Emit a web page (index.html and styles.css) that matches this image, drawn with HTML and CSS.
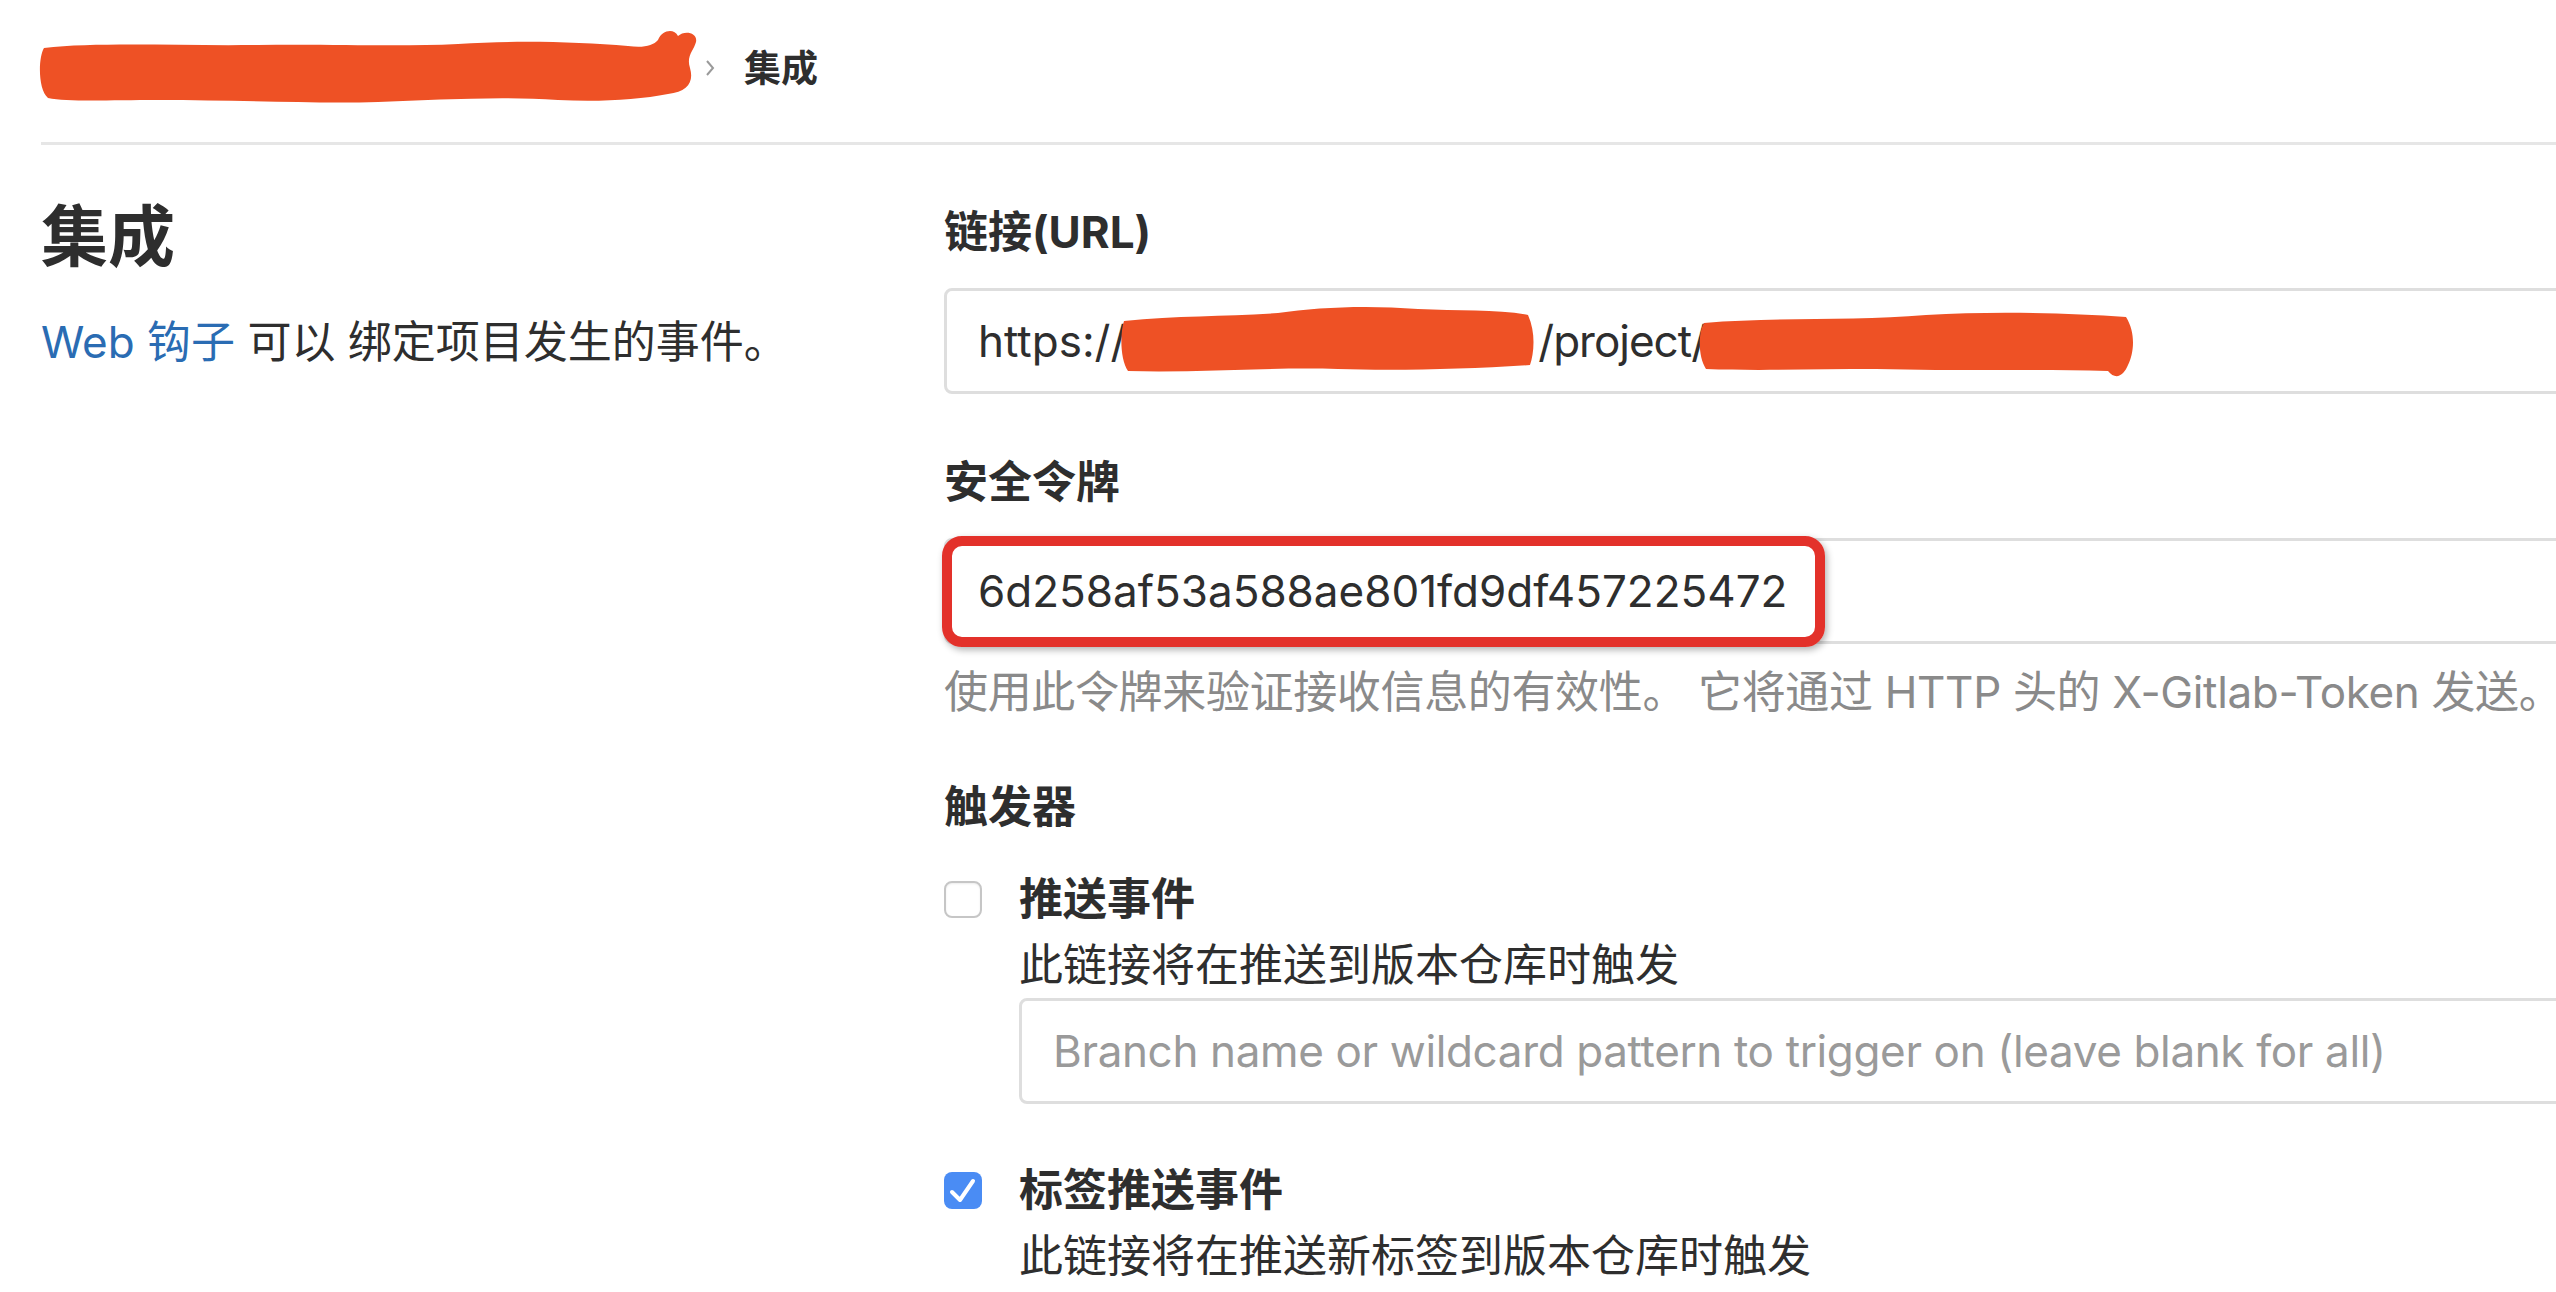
FILE: index.html
```html
<!DOCTYPE html>
<html lang="zh-CN">
<head>
<meta charset="utf-8">
<title>集成</title>
<link rel="stylesheet" href="styles.css">
</head>
<body>
<div class="page">
  <nav class="breadcrumb">
    <svg class="crumb-redact" viewBox="0 0 662 80" aria-hidden="true">
      <path d="M6,20 C60,14 140,18 220,17 C300,16 360,19 420,16 C480,12 540,14 590,18 C605,20 615,18 620,12 C624,2 636,0 640,8 C646,2 660,4 658,14 C656,22 648,28 652,40 C656,54 650,64 630,66 C600,72 560,74 520,72 C460,68 400,72 340,74 C280,76 200,72 120,72 C70,72 30,74 10,70 C0,62 0,30 6,20 Z"/>
    </svg>
    <svg class="chev" viewBox="0 0 14 20" aria-hidden="true"><path d="M4,3 L10,10 L4,17"/></svg>
    <span class="crumb-current">集成</span>
  </nav>
  <div class="main">
    <aside class="side">
      <h4 class="side-title">集成</h4>
      <p class="side-desc"><a class="link" href="#">Web 钩子</a> 可以 绑定项目发生的事件。</p>
    </aside>
    <form class="form">
      <div class="group">
        <label class="label">链接(URL)</label>
        <div class="input url-input">
          <span>https://</span>
          <svg class="redact r1" viewBox="0 0 420 70" aria-hidden="true">
            <path d="M6,18 C60,12 110,14 160,10 C200,4 250,2 300,6 C340,8 380,6 410,12 C418,30 416,50 412,62 C350,66 280,68 220,66 C150,64 80,70 10,68 C2,56 2,30 6,18 Z"/>
          </svg>
          <span class="proj">/project/</span>
          <svg class="redact r2" viewBox="0 0 440 72" aria-hidden="true">
            <path d="M8,14 C80,8 160,12 230,6 C300,2 370,4 430,8 C440,24 438,44 432,56 C428,66 420,72 412,62 C340,60 260,62 180,60 C120,60 60,62 10,60 C2,48 2,24 8,14 Z"/>
          </svg>
        </div>
      </div>
      <div class="group">
        <label class="label" for="token">安全令牌</label>
        <div class="field">
          <input class="input" id="token" type="text" value="6d258af53a588ae801fd9df457225472">
          <div class="annot"></div>
        </div>
        <p class="hint">使用此令牌来验证接收信息的有效性。 它将通过 HTTP 头的 X-Gitlab-Token 发送。</p>
      </div>
      <div class="triggers">
        <div class="label triggers-title">触发器</div>
        <div class="check-row">
          <div class="check-col"><span class="checkbox off"></span></div>
          <div class="check-body">
            <div class="check-label">推送事件</div>
            <div class="check-desc">此链接将在推送到版本仓库时触发</div>
            <input class="input branch" type="text" placeholder="Branch name or wildcard pattern to trigger on (leave blank for all)">
          </div>
        </div>
        <div class="check-row">
          <div class="check-col">
            <span class="checkbox on"><svg viewBox="0 0 38 37" aria-hidden="true"><path d="M8,20 L16,28 L29,9"/></svg></span>
          </div>
          <div class="check-body">
            <div class="check-label">标签推送事件</div>
            <div class="check-desc">此链接将在推送新标签到版本仓库时触发</div>
          </div>
        </div>
      </div>
    </form>
  </div>
</div>
</body>
</html>
```
FILE: styles.css
```css
html, body {
  margin: 0;
  background: #fff;
  overflow: hidden;
}
body {
  font-family: Inter, "Noto Sans CJK SC", sans-serif;
  color: #2e2e2e;
  font-size: 44px;
  line-height: 63px;
}
.page {
  padding-left: 41px;
}
.breadcrumb {
  display: flex;
  align-items: center;
  height: 136px;
  padding-bottom: 6px;
  border-bottom: 3px solid #e6e6e6;
}
.crumb-redact {
  width: 662px;
  height: 80px;
  margin-left: -3px;
  flex-shrink: 0;
  fill: #ee5125;
}
.chev {
  width: 14px;
  height: 20px;
  margin-left: 3px;
  flex-shrink: 0;
  fill: none;
  stroke: #9a9a9a;
  stroke-width: 2;
}
.crumb-current {
  margin-left: 27px;
  font-size: 37px;
  font-weight: 700;
  line-height: 1;
}
.main {
  display: flex;
  padding-top: 56px;
}
.side {
  width: 903px;
  flex-shrink: 0;
}
.side-title {
  margin: 0;
  font-size: 67px;
  line-height: 72px;
  font-weight: 700;
}
.side-desc {
  margin: 38px 0 0;
}
.link {
  color: #2a6cb3;
  text-decoration: none;
}
.form {
  width: 1620px;
  flex-shrink: 0;
}
.label {
  display: block;
  font-weight: 700;
  margin-bottom: 24px;
}
.group + .group {
  margin-top: 57px;
}
.input {
  box-sizing: border-box;
  display: flex;
  align-items: center;
  width: 100%;
  height: 106px;
  margin: 0;
  padding: 0 31px;
  border: 3px solid #dedede;
  border-radius: 8px;
  background: #fff;
  color: #2e2e2e;
  font-family: inherit;
  font-size: 44px;
  outline: none;
}
.input::placeholder {
  color: #9a9a9a;
}
.url-input span {
  white-space: pre;
}
.proj {
  letter-spacing: -1px;
}
.redact {
  flex-shrink: 0;
  fill: #ee5125;
}
.r1 {
  width: 420px;
  height: 70px;
  margin-left: -8px;
  margin-top: -6px;
}
.r2 {
  width: 440px;
  height: 72px;
  margin-left: -10px;
  margin-top: 8px;
}
.field {
  position: relative;
}
.annot {
  position: absolute;
  left: -2px;
  top: -2px;
  width: 883px;
  height: 111px;
  box-sizing: border-box;
  border: 10px solid #e3312a;
  border-radius: 20px;
  box-shadow: 2px 3px 7px rgba(0, 0, 0, 0.3);
}
.hint {
  width: max-content;
  margin: 17px 0 0;
  color: #8a8a8a;
  white-space: nowrap;
  letter-spacing: -0.35px;
}
.triggers-title {
  margin-top: 52px;
  margin-bottom: 0;
}
.check-row {
  display: flex;
  gap: 37px;
  margin-top: 29px;
}
.check-row + .check-row {
  margin-top: 55px;
}
.check-col {
  height: 63px;
  display: flex;
  align-items: center;
  flex-shrink: 0;
}
.checkbox {
  display: block;
  width: 38px;
  height: 37px;
  box-sizing: border-box;
  border-radius: 8px;
}
.checkbox.off {
  border: 2px solid #c6c6c6;
  background: #fff;
  box-shadow: inset 0 1px 2px rgba(0, 0, 0, 0.08);
}
.checkbox.on {
  background: #4a8cf4;
}
.checkbox svg {
  display: block;
  width: 38px;
  height: 37px;
  fill: none;
  stroke: #fff;
  stroke-width: 4;
  stroke-linecap: round;
  stroke-linejoin: round;
}
.check-body {
  flex: 1;
}
.check-label {
  font-weight: 700;
}
.check-desc {
  margin-top: 3px;
}
.branch {
  margin-top: 1px;
  letter-spacing: -0.36px;
}
```
